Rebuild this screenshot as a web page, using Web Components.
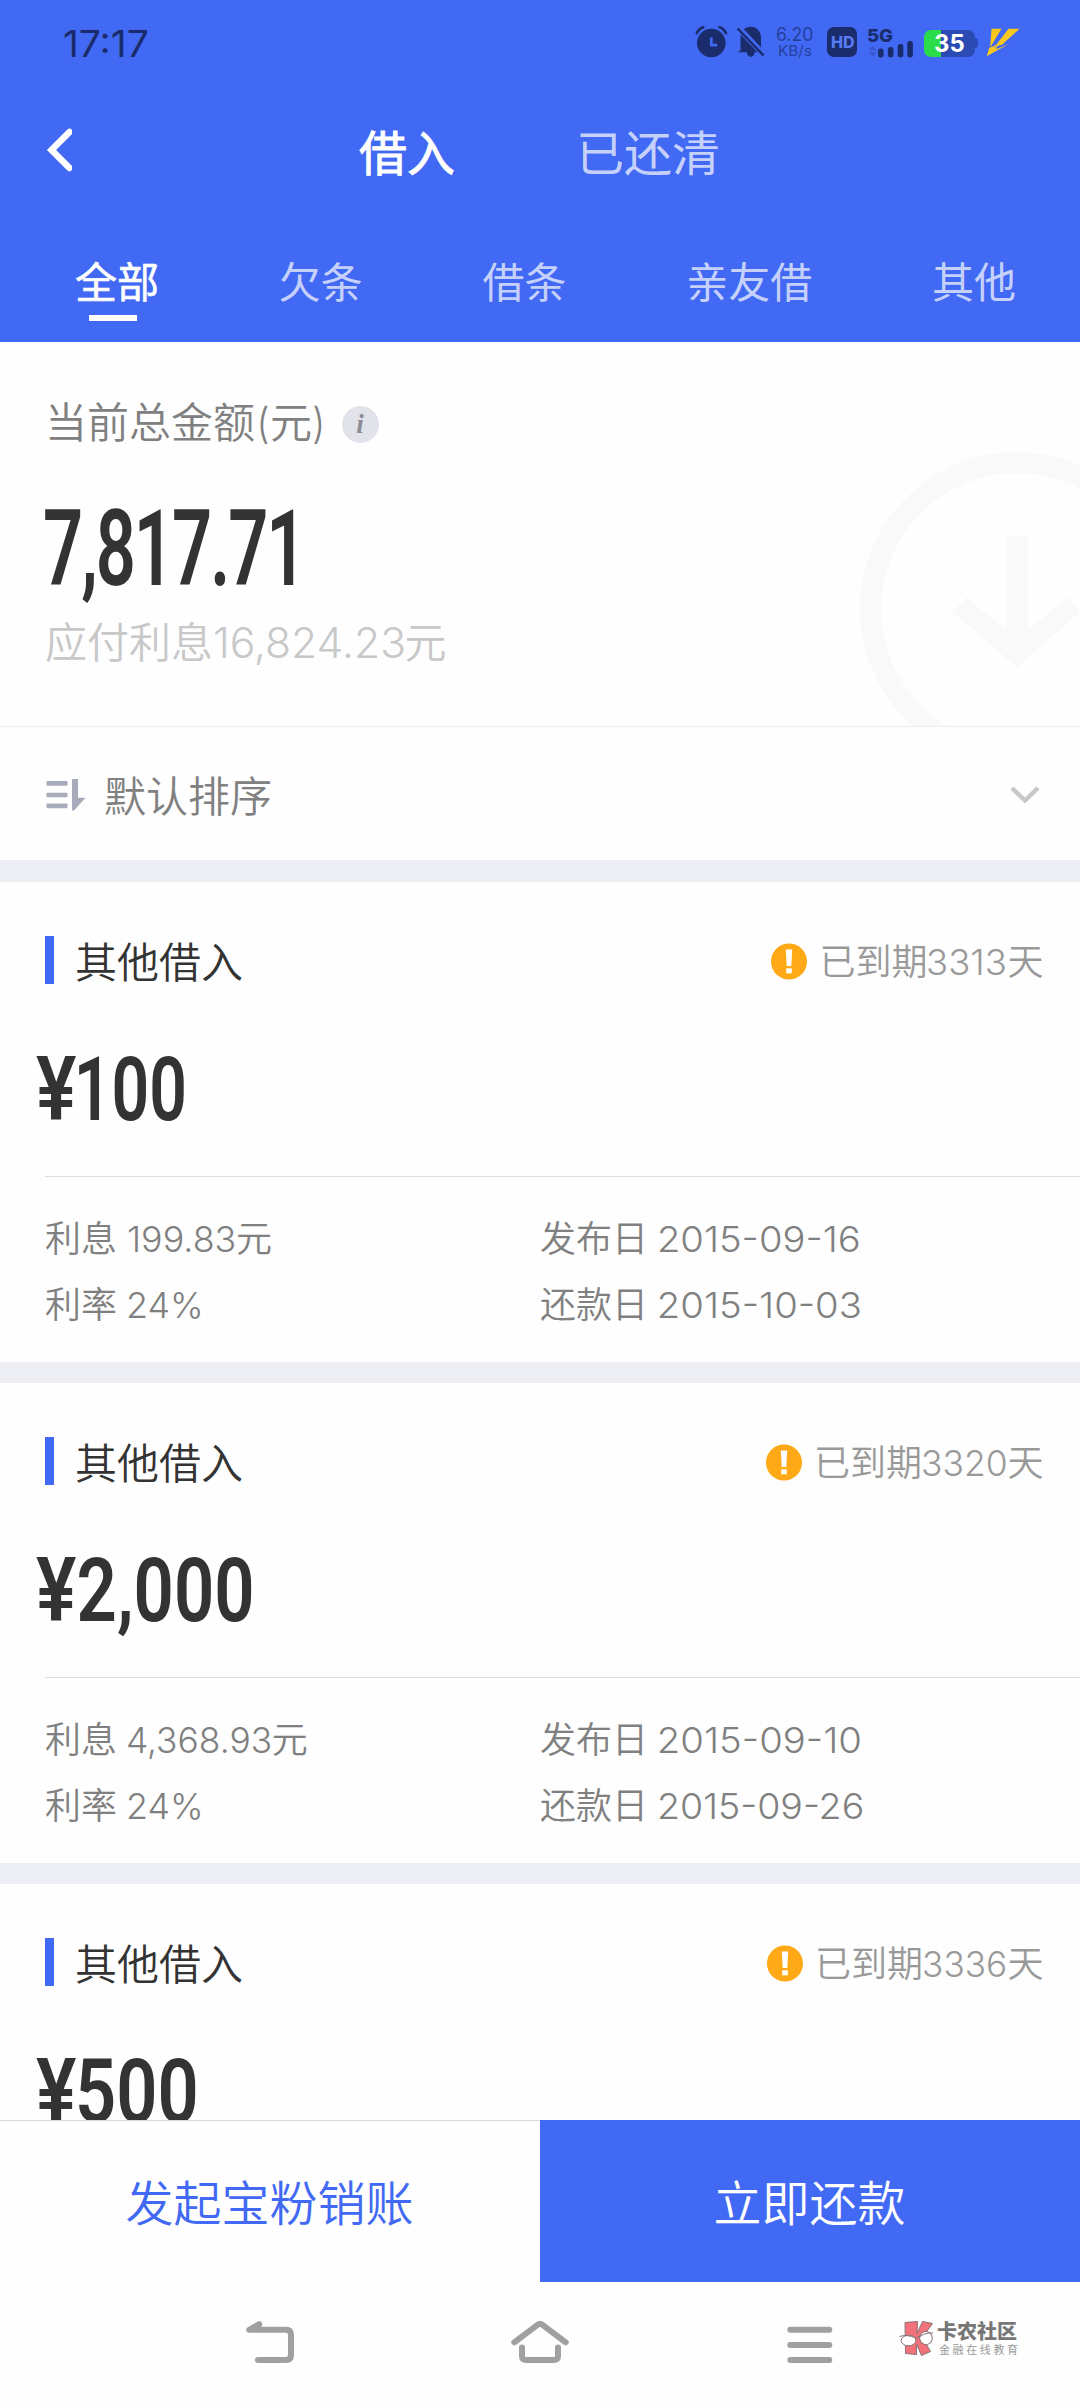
<!DOCTYPE html>
<html lang="zh-CN">
<head>
<meta charset="utf-8">
<title>借入</title>
<style>
  html, body { margin: 0; padding: 0; }
  body {
    width: 1080px; height: 2408px; overflow: hidden; background: #fefefe;
    font-family: Inter, "Noto Sans CJK SC", sans-serif; font-weight: 350; color: #333;
  }
</style>
</head>
<body>
<loan-app></loan-app>
<script>
const define = (name, css, html, setup) => {
  const tpl = document.createElement('template');
  tpl.innerHTML = `<style>:host{display:block;box-sizing:border-box}*{box-sizing:border-box}svg{display:block;flex:none}${css}</style>${html}`;
  customElements.define(name, class extends HTMLElement {
    connectedCallback() {
      if (this.shadowRoot) return;
      this.attachShadow({ mode: 'open' }).append(tpl.content.cloneNode(true));
      if (setup) setup(this, this.shadowRoot);
    }
  });
};

/* Run of Latin text whose visible glyphs span exactly `w` pixels. */
const pen = document.createElement('canvas').getContext('2d');
define('fit-run', `
  :host{display:inline-block;white-space:nowrap}
  span{display:inline-block;transform-origin:0 50%;white-space:nowrap}
`, `<span><slot></slot></span>`, (el, root) => {
  const w = +el.getAttribute('w');
  el.style.width = w + 'px';
  const cs = getComputedStyle(el);
  pen.font = `${cs.fontWeight} ${cs.fontSize} ${cs.fontFamily}`;
  pen.letterSpacing = cs.letterSpacing === 'normal' ? '0px' : cs.letterSpacing;
  const m = pen.measureText(el.textContent.trim());
  const left = -m.actualBoundingBoxLeft, ink = m.actualBoundingBoxRight - left;
  root.querySelector('span').style.transform = `scaleX(${w / ink}) translateX(${-left}px)`;
});

define('status-bar', `
  :host{display:flex;align-items:center;height:84px;padding-left:64px;color:#1a2c6c}
  .time{font:400 36.5px/40px Inter;margin-top:4px}
  .right{display:flex;align-items:center;margin-left:auto;padding-right:61px;height:30px}
  .rate{display:flex;flex-direction:column;width:36px;align-items:center;margin:0 14px 0 12px;font:400 18px/17px Inter;color:#24409c}
  .rate .u{font-size:14.5px;line-height:15px}
  .hd{display:flex;align-items:center;justify-content:center;width:30px;height:30px;border-radius:7px;background:#1a2c6c;color:#587af3;font:800 16px/30px Inter}
  .sig{margin:0 11px}
  .bat{display:flex;align-items:center;justify-content:center;width:51px;height:27px;border-radius:7px;margin-top:2px;
    background:linear-gradient(90deg,#2adb4a 17px,#2b4ab4 17px);color:#fff;font:700 24.5px/27px Inter}
  .nub{width:3px;height:10px;border-radius:0 3px 3px 0;background:#2b4ab4;margin:2px 8px 0 0}
`, `
  <fit-run class="time" w="83">17:17</fit-run>
  <div class="right">
    <svg width="70" height="32" viewBox="696 26 70 32" fill="#1a2c6c">
      <circle cx="712.3" cy="43" r="14.3"/>
      <path d="M697.8 33.2q2-4.6 6.4-6M727 33.2q-2-4.6-6.4-6" fill="none" stroke="#1a2c6c" stroke-width="2.6" stroke-linecap="round"/>
      <path d="M712.3 37.5v7.6h6" fill="none" stroke="#4169f3" stroke-width="2.8"/>
      <path d="M741.5 50.5V38c0-7 4.3-11.3 10.2-11.3S762 31 762 38v9l3 5.200h-9.500c-.3 3-1.600 4.500-3.800 4.500s-3.500-1.500-3.800-4.500H738.700Z"/>
      <path d="M739 27.500 766 55.800" stroke="#4169f3" stroke-width="6"/>
      <path d="M738.600 28.500 764.500 55.400" stroke="#1a2c6c" stroke-width="2.400"/>
    </svg>
    <div class="rate"><fit-run w="36">6.20</fit-run><fit-run class="u" w="32">KB/s</fit-run></div>
    <div class="hd"><fit-run w="23">HD</fit-run></div>
    <svg class="sig" width="45" height="32" viewBox="869 26 45 32" fill="#1a2c6c">
      <text x="868" y="41.500" font-family="Inter" font-weight="800" font-size="18" textLength="26" lengthAdjust="spacingAndGlyphs">5G</text>
      <path d="M869.500 50.500 873.700 46l4.200 4.500zM869.500 52l4.200 4.500 4.200-4.500z" fill="#3858cf"/>
      <rect x="879" y="48.500" width="5.600" height="9" rx="2.400"/><rect x="888.900" y="47" width="5.600" height="10.500" rx="2.400"/>
      <rect x="898.700" y="44" width="5.600" height="13.500" rx="2.400"/><rect x="908.300" y="41" width="5.600" height="16.500" rx="2.400"/>
    </svg>
    <div class="bat"><fit-run w="29">35</fit-run></div><div class="nub"></div>
    <svg width="33" height="30" viewBox="986 28 33 30" fill="#f9c81e">
      <path d="M991.500 29.800h10l-11.300 18.800zM1008.500 29.800h11L1001.500 46l-5.500 0zM989 49.500l8-1.600-.8 2.400 12.500-5.300L986.700 57.300z"/>
      <path d="M989 50 1004 43.500" stroke="#f9c81e" stroke-width="1.500"/>
    </svg>
  </div>
`);

define('nav-header', `
  :host{display:flex;align-items:center;height:136px;padding-left:46px;font-size:48px;line-height:60px;color:#fff;font-weight:400}
  svg{margin-top:-4px}
  div{margin-top:3px}
  .on{margin-left:287px;-webkit-text-stroke:.9px #fff}
  .off{margin-left:121px;color:#c5d1fb}
`, `
  <svg width="26" height="44" viewBox="0 0 26 44"><path d="M23.500 4 5.500 22 23.500 40" fill="none" stroke="#fff" stroke-width="6.500" stroke-linecap="round"/></svg>
  <div class="on">借入</div><div class="off">已还清</div>
`);

define('tab-strip', `
  :host{display:flex;justify-content:space-between;align-items:flex-start;height:122px;padding:37px 64px 0 75px;font-size:42px;line-height:52px;font-weight:400;color:#c5d1fb}
  .tab{display:flex;flex-direction:column;align-items:center}
  .on{color:#fff;-webkit-text-stroke:.6px #fff}
  .on::after{content:"";width:48px;height:6px;background:#fff;margin-top:6px;margin-right:8px}
`, `<div class="tab on">全部</div><div class="tab">欠条</div><div class="tab">借条</div><div class="tab">亲友借</div><div class="tab">其他</div>`);

define('total-panel', `
  :host{display:flex;justify-content:space-between;height:385px;border-bottom:1px solid #ededed;overflow:hidden}
  .info{display:flex;flex-direction:column;padding:54px 0 0 45px}
  .label{display:flex;align-items:center;font-size:42px;line-height:54px;color:#808080}
  .i{width:37px;height:37px;border-radius:50%;background:#e2e3ea;color:#8a8c96;margin:3px 0 0 19.500px;text-align:center;font:italic 700 27px/36px "Liberation Serif"}
  .sum{font:600 106px/106px Roboto;letter-spacing:-3px;color:#333;margin-top:46px}
  .due{font-size:42px;line-height:54px;color:#c8c8c8;margin-top:14px}
  .ghost{margin-top:110px}
`, `
  <div class="info">
    <div class="label">当前总金额<fit-run w="8" style="margin:0 2px 0 5px">(</fit-run>元<fit-run w="8" style="margin-left:2px">)</fit-run><div class="i">i</div></div>
    <div class="sum"><fit-run w="248.500">7,817.71</fit-run></div>
    <div class="due">应付利息<fit-run w="188.500" style="margin:0 1px 0 2px">16,824.23</fit-run>元</div>
  </div>
  <svg class="ghost" width="220" height="315" viewBox="860 452 220 315">
    <circle cx="1017" cy="609" r="146.500" fill="none" stroke="#f9f9f9" stroke-width="21"/>
    <path fill="#f9f9f9" d="M952.700 611.700l14-14.400 39.300 33V536h22v94.300l39-33 13 14.400L1017 667.300z"/>
  </svg>
`);

define('sort-row', `
  :host{display:flex;align-items:center;height:133px;padding:2px 40px 0 46px;font-size:42px;line-height:54px;color:#808080}
  .t{margin:4px auto 0 18px}
`, `
  <svg width="40" height="32" viewBox="46 778 40 32" fill="#a8acba">
    <rect x="46.500" y="780" width="21" height="4.700" rx="1"/><rect x="46.500" y="791.800" width="21" height="4.500" rx="1"/><rect x="46.500" y="802.600" width="21" height="4.600" rx="1"/>
    <path d="M72 778h6v18.700h7.600L74 809.500h-2z"/>
  </svg>
  <div class="t">默认排序</div>
  <svg width="30" height="20" viewBox="0 0 30 20"><path d="M2 3 15 15.500 28 3" fill="none" stroke="#c8c8c8" stroke-width="4.500"/></svg>
`);

define('loan-card', `
  :host{display:flex;flex-direction:column;height:480px;flex:none;background:#fefefe}
  .head{display:flex;align-items:center;height:48px;margin:54px 36.500px 0 45px;font-size:42px;color:#333}
  .bar{width:9px;height:48px;background:#4169f3;margin-right:21px}
  .name{line-height:54px;margin-top:5px}
  .late{display:flex;align-items:center;gap:12px;margin-left:auto;font-size:36px;line-height:48px;color:#999}
  .late fit-run{margin:0 2px 0 1px}
  .late svg{margin-top:3px}.late div{margin-top:4px}
  .amt{display:flex;font:600 89px/90px Roboto;color:#333;margin:61px 0 0 36px;height:90px}
  .amt fit-run + fit-run{margin-left:2.500px}
  .grid{display:grid;grid-template-columns:495px 1fr;grid-auto-rows:66px;align-items:center;margin:41px 0 0 45px;padding-top:29px;border-top:1px solid #ddd;font-size:36px;line-height:48px;color:#808080}
  .grid fit-run{margin:0 2px 0 10.500px}
`, `
  <div class="head"><div class="bar"></div><div class="name">其他借入</div>
    <div class="late"><svg width="36" height="37" viewBox="0 0 36 37"><circle cx="18" cy="18.500" r="18" fill="#ffa916"/><path d="M14.800 6.500h6.400l-.9 16.500h-4.600z" fill="#fff"/><rect x="15.200" y="25.300" width="5.600" height="5" fill="#fff"/></svg><div data-k="late"></div></div>
  </div>
  <div class="amt" data-k="amt"></div>
  <div class="grid"><div data-k="interest"></div><div data-k="issued"></div><div data-k="rate"></div><div data-k="repay"></div></div>
`, (el, root) => {
  root.querySelectorAll('[data-k]').forEach(n => {
    if (el.data[n.dataset.k]) n.innerHTML = el.data[n.dataset.k];
  });
});

define('loan-list', `
  :host{display:flex;flex-direction:column;gap:21px;flex:1;min-height:0;overflow:hidden;padding-top:22px;background:#eeeff4}
`, ``, (el, root) => {
  const run = (w, t) => `<fit-run w="${w}">${t}</fit-run>`;
  [
    { late: ['3313', 77], amt: ['100', 105], interest: ['199.83', 106.5], issued: ['2015-09-16', 200], repay: ['2015-10-03', 201] },
    { late: ['3320', 82.5], amt: ['2,000', 172.5], interest: ['4,368.93', 142.3], issued: ['2015-09-10', 200.5], repay: ['2015-09-26', 203.5] },
    { late: ['3336', 81.6], amt: ['500', 116.5] }
  ].forEach(d => {
    const card = document.createElement('loan-card');
    const r = k => run(d[k][1], d[k][0]);
    card.data = { late: `已到期${r('late')}天`, amt: run(40, '¥') + r('amt') };
    if (d.interest) Object.assign(card.data, {
      interest: `利息${r('interest')}元`, issued: `发布日${r('issued')}`,
      rate: `利率${run(72, '24%')}`, repay: `还款日${r('repay')}`
    });
    root.append(card);
  });
});

define('action-bar', `
  :host{display:flex;height:162px;font-size:48px;line-height:60px}
  div{flex:1;display:flex;align-items:center;justify-content:center;padding:5px 1px 0 0}
  .a{color:#4169f3;border-top:1px solid #d9d9d9}
  .b{background:#4169f3;color:#fff}
`, `<div class="a">发起宝粉销账</div><div class="b">立即还款</div>`);

define('system-nav', `
  :host{display:flex;align-items:flex-start;height:126px;padding:38px 63px 0 246px}
  svg.n{fill:none;stroke:#a0a0a0;stroke-width:6;stroke-linecap:round;stroke-linejoin:round}
  .home{margin-left:217px}.menu{margin-left:217px}
  .brand{display:flex;gap:3px;margin-left:auto;height:36px}
  .words{display:flex;flex-direction:column;width:80px}
  .w1{font:900 20px/22px "Noto Sans CJK SC";color:#777}
  .w2{font:400 11px/14px "Noto Sans CJK SC";letter-spacing:2.600px;color:#999;margin-left:2px;white-space:nowrap}
`, `
  <svg class="n" width="48" height="46" viewBox="246 2320 48 46"><path d="M259.300 2324.200 249.300 2329.800H286q5 0 5 5V2355q0 5-5 5H258"/></svg>
  <svg class="n home" width="58" height="46" viewBox="511 2320 58 46"><path d="M514.300 2342.300 537.500 2324.800q2.500-1.800 5 0L565.700 2342.300M522 2347.500V2356q0 4 4 4h28q4 0 4-4v-8.500"/></svg>
  <svg class="n menu" width="48" height="46" viewBox="786 2320 48 46"><path d="M790.300 2329.800h39M790.300 2345h39M790.300 2360h39"/></svg>
  <div class="brand">
    <svg width="35" height="36" viewBox="0 0 35 36" stroke="#8a7376" stroke-width="1" stroke-linejoin="round">
      <path d="M6 2.500 18.500 1.500 18 13.500 23.500 1.500 33.500 3.500 23.500 17.500 31.500 31.500 22.500 35.500 17.500 24 17.500 34.500 6.500 33.500z" fill="#f2727c"/>
      <ellipse cx="9.500" cy="20.500" rx="7.300" ry="5.300" fill="#fff"/><ellipse cx="27" cy="18" rx="6.300" ry="6.500" fill="#fff" transform="rotate(-20 27 18)"/>
      <path d="M.5 16.500q7-2.500 16.500 1.500 2-2 4-1.500 5-4 13-3.500" fill="none"/>
    </svg>
    <div class="words"><div class="w1">卡农社区</div><div class="w2">金融在线教育</div></div>
  </div>
`);

define('loan-app', `
  :host{display:flex;flex-direction:column;width:1080px;height:2408px;overflow:hidden}
  header{background:#4169f3;height:342px;flex:none}
  total-panel,sort-row,action-bar,system-nav{flex:none}
`, `<header><status-bar></status-bar><nav-header></nav-header><tab-strip></tab-strip></header>
  <total-panel></total-panel><sort-row></sort-row><loan-list></loan-list><action-bar></action-bar><system-nav></system-nav>`);
</script>
</body>
</html>
